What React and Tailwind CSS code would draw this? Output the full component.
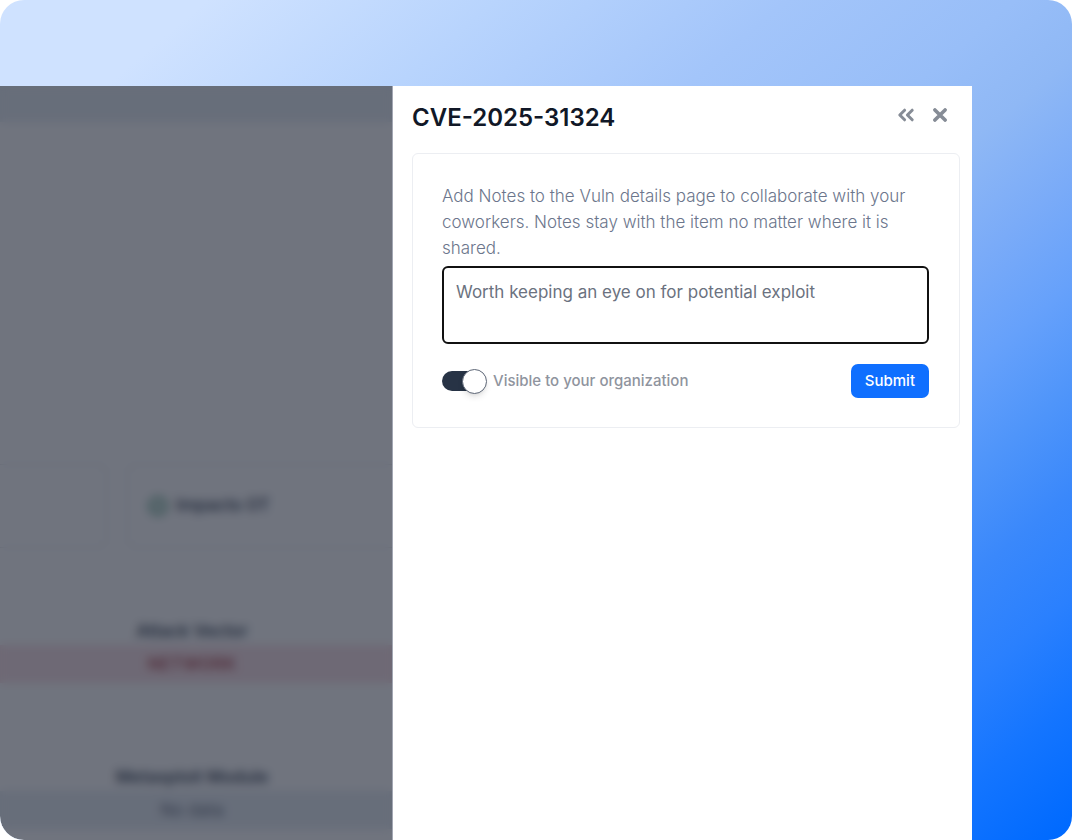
import React, { useState } from 'react';
import { CircleCheck } from 'lucide-react';

function ChevronsIcon() {
  return (
    <svg viewBox="0 0 18 14" className="h-[14px] w-[18px]" fill="none" stroke="currentColor" strokeWidth="3" strokeLinecap="round" strokeLinejoin="round" aria-hidden="true">
      <path d="M7.6 2.2 2.8 7l4.8 4.8M15.2 2.2 10.4 7l4.8 4.8" />
    </svg>
  );
}

function CloseIcon() {
  return (
    <svg viewBox="0 0 14 14" className="size-[14px]" fill="none" stroke="currentColor" strokeWidth="3.6" strokeLinecap="round" aria-hidden="true">
      <path d="M1.9 1.9l10.2 10.2M12.1 1.9 1.9 12.1" />
    </svg>
  );
}

function Metric({ label, value, tone, className }) {
  return (
    <section className={`text-center text-[17px] ${className}`}>
      <h3 className="pb-0.5 leading-6 font-semibold text-gray-600">{label}</h3>
      <p className={`h-[38px] leading-[38px] ${tone}`}>{value}</p>
    </section>
  );
}

function DetailsPage() {
  return (
    <div className="relative min-w-0 flex-1 overflow-hidden bg-white">
      <div className="h-9 bg-[#e9eff5]" />
      <div className="mt-[342px] flex h-[84px] gap-5">
        <div className="w-[107px] rounded-r-lg border border-l-0 border-gray-200" />
        <div className="flex flex-1 items-center gap-2 rounded-l-lg border border-r-0 border-gray-200 pl-5">
          <CircleCheck className="size-5 text-[#4f9a7c]" strokeWidth={3} />
          <span className="text-[17px] font-semibold text-gray-600">Impacts OT</span>
        </div>
      </div>
      <Metric label="Attack Vector" value="NETWORK" tone="bg-[#fbe3e8] font-bold text-[#c0686e]" className="mt-[71px] [&>*]:pr-2" />
      <Metric label="Metasploit Module" value="No data" tone="bg-[#e9eff5] text-gray-500" className="mt-[82px] [&>*]:pr-2" />
      <div className="absolute inset-0 bg-gray-900/60 backdrop-blur-[5px]" />
    </div>
  );
}

function NotesDrawer() {
  const [note, setNote] = useState('Worth keeping an eye on for potential exploit');
  const [visible, setVisible] = useState(true);

  return (
    <aside className="w-[580px] shrink-0 border-l border-[#a3a7b3] bg-white pr-3 pl-[19px]">
      <header className="flex h-[67px] items-center justify-between pr-[13px] pb-1">
        <h1 className="text-2xl font-semibold text-[#111827]">CVE-2025-31324</h1>
        <div className="flex items-center gap-[18px] pb-1.5 text-[#868c96]">
          <button type="button" aria-label="Collapse" className="cursor-pointer">
            <ChevronsIcon />
          </button>
          <button type="button" aria-label="Close" className="cursor-pointer">
            <CloseIcon />
          </button>
        </div>
      </header>

      <form className="rounded-md border border-[#eceef2] pt-[29px] pr-[30px] pb-[29px] pl-[29px]" onSubmit={(e) => e.preventDefault()}>
        <p className="text-[17px] leading-[26px] font-light text-[#6c768c]">
          Add Notes to the Vuln details page to collaborate with your coworkers. Notes stay with the item no matter where it is shared.
        </p>
        <textarea
          aria-label="Note"
          value={note}
          onChange={(e) => setNote(e.target.value)}
          className="mt-[5px] block h-[78px] w-full resize-none rounded-md border-2 border-[#111] bg-white px-3 py-3 text-[17px] leading-6 text-[#6b7280] outline-none"
        />
        <div className="mt-5 flex items-center justify-between">
          <label className="flex cursor-pointer items-center gap-1.5 text-[15px] font-medium text-[#8f949e]">
            <input type="checkbox" role="switch" checked={visible} onChange={(e) => setVisible(e.target.checked)} className="peer sr-only" />
            <span className="flex h-5 w-[45px] items-center rounded-full bg-gray-300 peer-checked:justify-end peer-checked:bg-[linear-gradient(90deg,#273345_75%,transparent_75%)] peer-checked:bg-transparent">
              <span className="size-[25px] shrink-0 rounded-full border border-[#5d6676] bg-white shadow-md" />
            </span>
            Visible to your organization
          </label>
          <button type="submit" className="h-[34px] cursor-pointer rounded-[7px] bg-[#0f6fff] px-3.5 text-[15px] font-medium text-white">
            Submit
          </button>
        </div>
      </form>
    </aside>
  );
}

export default function App() {
  return (
    <div className="min-h-screen bg-white font-[Inter,sans-serif]">
      <main className="flex min-h-screen overflow-hidden rounded-3xl bg-[linear-gradient(140deg,#cfe2ff_0%,#cfe2ff_10%,#b8d4fd_24%,#a3c5fa_38%,#98bef8_49%,#8fb8f5_55%,#7aabf8_62%,#66a1fb_68%,#4f95fa_74%,#3a88fb_80%,#2a80fe_86%,#1475ff_92%,#006aff_99%)] pt-[86px] pr-[100px]">
        <DetailsPage />
        <NotesDrawer />
      </main>
    </div>
  );
}
